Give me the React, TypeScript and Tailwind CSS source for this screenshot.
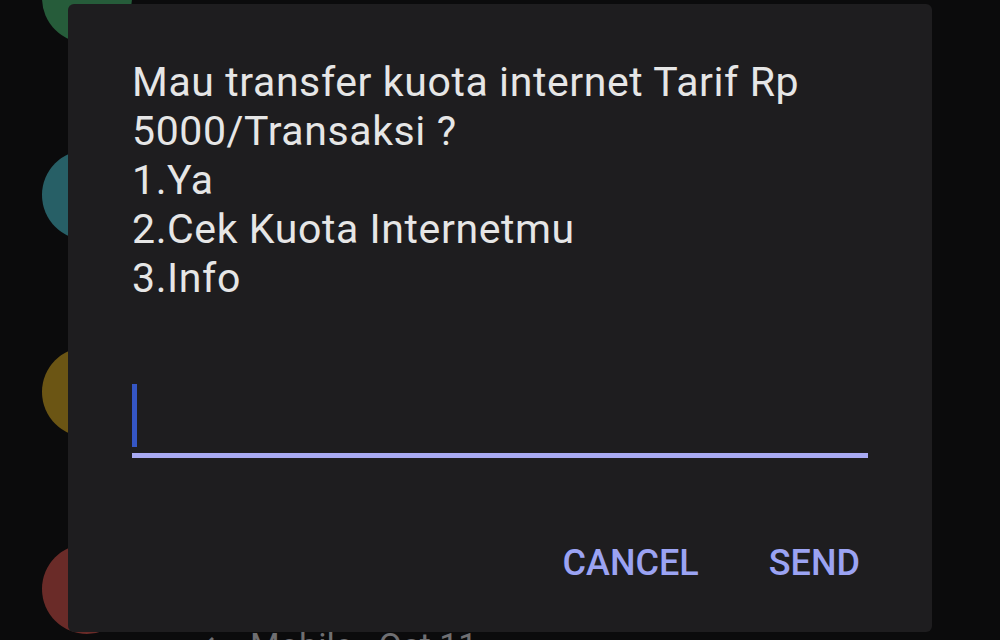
import React from 'react';

// USSD prompt dialog over a dimmed contact list
const ROWS = [
  { color: 'bg-[#265c3a]', sub: '' },
  { color: 'bg-[#275f66]', sub: '' },
  { color: 'bg-[#6b5514]', sub: '' },
  { color: 'bg-[#6a2b28]', sub: 'Mobile · Oct 11' },
];

const LINES = [
  'Mau transfer kuota internet Tarif Rp',
  '5000/Transaksi ?',
  '1.Ya',
  '2.Cek Kuota Internetmu',
  '3.Info',
];

export default function App() {
  return (
    <div
      className="relative w-[1000px] h-[640px] overflow-hidden bg-[#0b0b0c]"
      style={{ fontFamily: 'Roboto, "Noto Sans", sans-serif' }}
    >
      {/* dimmed list behind the dialog */}
      <div className="flex flex-col -mt-[101px]">
        {ROWS.map((r, i) => (
          <div key={i} className="flex items-center h-[197px] shrink-0 pl-[42px]">
            <div className={`w-[90px] h-[90px] rounded-full shrink-0 ${r.color}`} />
            {r.sub && (
              <div className="ml-[58px] mt-[112px] flex items-center gap-[32px] text-[34px] leading-[40px] text-[#6f6f72]">
                <span>↙</span>
                <span>{r.sub}</span>
              </div>
            )}
          </div>
        ))}
      </div>

      {/* dialog */}
      <div className="absolute left-[68px] top-[4px] w-[864px] h-[628px] rounded-[6px] bg-[#1e1d1f] flex flex-col px-[64px] pt-[54px]">
        <div className="text-[41px] leading-[49px] tracking-[0.6px] text-[#e6e6e6]">
          {LINES.map((l, i) => (
            <div key={i}>{l}</div>
          ))}
        </div>

        <div className="mt-[81px] flex flex-col">
          <div className="w-[5px] h-[63px] bg-[#3556c4]" />
          <div className="mt-[6px] h-[5px] w-full bg-[#a9aaf3]" />
        </div>

        <div className="mt-[78px] flex justify-end items-center gap-[70px] mr-[8px] text-[36px] font-medium text-[#9ba3f3]">
          <span>CANCEL</span>
          <span>SEND</span>
        </div>
      </div>
    </div>
  );
}
